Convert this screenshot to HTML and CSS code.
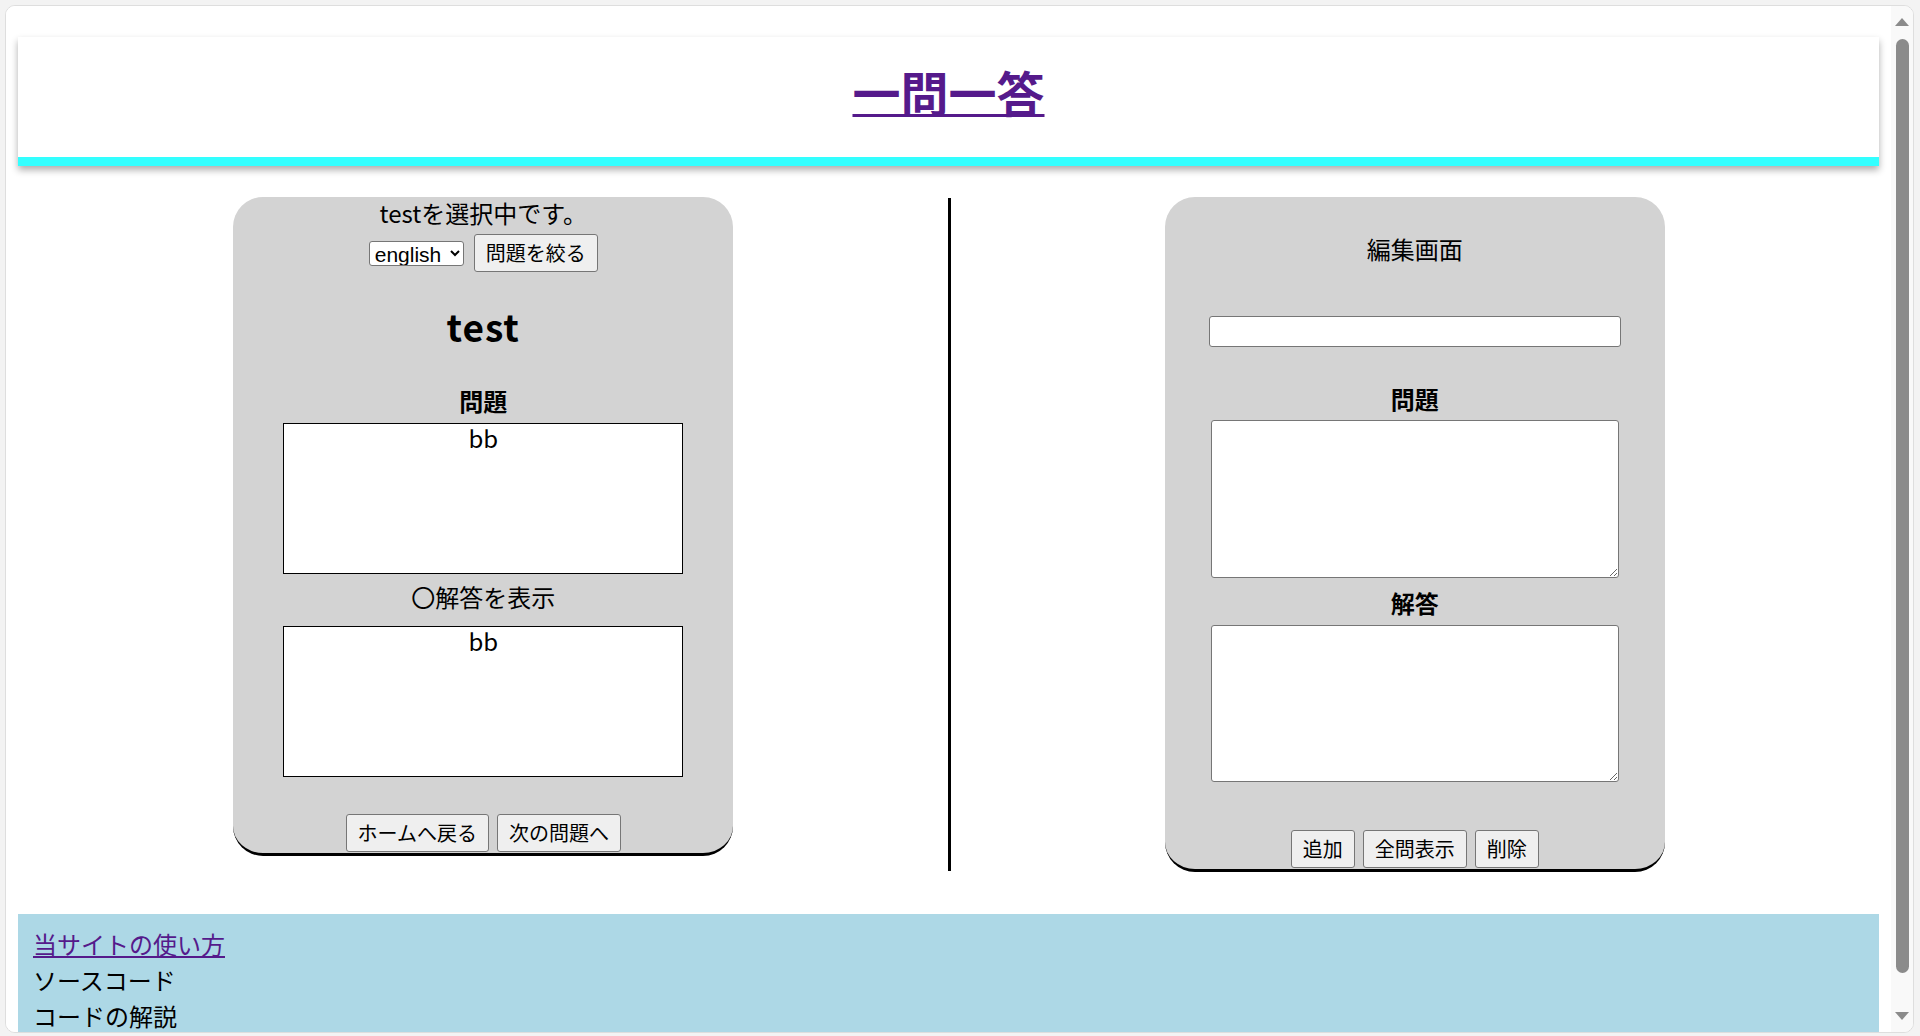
FILE: index.html
```html
<!DOCTYPE html>
<html lang="ja">
<head>
<meta charset="utf-8">
<title>一問一答</title>
<link rel="stylesheet" href="styles.css">
</head>
<body>
<div class="screen">
  <div class="window">
    <div class="page">
      <header class="site-header">
        <h1 class="title"><a href="#" class="title-link">一問一答</a></h1>
      </header>
      <main class="main">
        <section class="col">
          <div class="card card-quiz">
            <p class="sel-text">testを選択中です。</p>
            <div class="controls">
              <select class="genre"><option>english</option></select>
              <button class="btn">問題を絞る</button>
            </div>
            <h2 class="q-title">test</h2>
            <p class="label label-q">問題</p>
            <div class="box box-q">bb</div>
            <p class="show-answer">〇解答を表示</p>
            <div class="box box-a">bb</div>
            <div class="btn-row btn-row-quiz">
              <button class="btn">ホームへ戻る</button>
              <button class="btn">次の問題へ</button>
            </div>
          </div>
        </section>
        <div class="divider"></div>
        <section class="col">
          <div class="card card-edit">
            <p class="edit-title">編集画面</p>
            <input class="field" type="text">
            <p class="label label-eq">問題</p>
            <textarea class="area area-q"></textarea>
            <p class="label label-ea">解答</p>
            <textarea class="area area-a"></textarea>
            <div class="btn-row btn-row-edit">
              <button class="btn">追加</button>
              <button class="btn">全問表示</button>
              <button class="btn">削除</button>
            </div>
          </div>
        </section>
      </main>
      <footer class="site-footer">
        <a href="#" class="foot-link">当サイトの使い方</a>
        <p class="foot-item">ソースコード</p>
        <p class="foot-item">コードの解説</p>
      </footer>
    </div>
    <div class="scrollbar">
      <div class="arrow-up"></div>
      <div class="thumb"></div>
      <div class="arrow-down"></div>
    </div>
  </div>
</div>
</body>
</html>
```
FILE: styles.css
```css
html, body {
  margin: 0;
  padding: 0;
}
body {
  font-family: "Noto Sans CJK JP", "Noto Sans", sans-serif;
  font-size: 24px;
  color: #000;
  background: #f3f3f3;
}
.screen {
  width: 1920px;
  height: 1036px;
  box-sizing: border-box;
  padding: 5px 6px 3px 5px;
  background: #f3f3f3;
}
.window {
  height: 100%;
  box-sizing: border-box;
  border: 1px solid #dedede;
  border-radius: 10px;
  background: #fff;
  display: flex;
  overflow: hidden;
}
.page {
  flex: 1;
  min-width: 0;
  padding: 31px 12px 0 12px;
  overflow: hidden;
  background: #fff;
}

/* header */
.site-header {
  height: 120px;
  box-sizing: content-box;
  background: #fff;
  border-bottom: 9px solid #33ffff;
  box-shadow: 0 4px 7px rgba(0, 0, 0, 0.32);
  text-align: center;
}
.title {
  margin: 0;
  padding-top: 30px;
  font-size: 48px;
  line-height: 48px;
  font-weight: bold;
}
.title-link {
  color: #551a8b;
  text-decoration: underline;
  text-decoration-thickness: 3px;
}

/* main */
.main {
  display: flex;
  align-items: flex-start;
  margin-top: 31px;
  padding-left: 1px;
}
.col {
  flex: 1;
  display: flex;
  justify-content: center;
}
.divider {
  width: 3px;
  height: 673px;
  margin-top: 1px;
  background: #000;
}
.card {
  width: 500px;
  box-sizing: border-box;
  background: #d3d3d3;
  border-radius: 30px;
  border-bottom: 3px solid #000;
  display: flex;
  flex-direction: column;
  align-items: center;
}
.card p {
  margin: 0;
}
.card-quiz {
  padding-bottom: 1px;
}
.sel-text {
  line-height: 32px;
}
.controls {
  margin-top: 5px;
  height: 38px;
  display: flex;
  align-items: center;
  gap: 10px;
}
.genre {
  margin: 0;
  width: 95px;
  height: 25px;
  box-sizing: border-box;
  font-family: "Liberation Sans", Arial, sans-serif;
  font-size: 21px;
  color: #000;
  background: #fff;
  border: 1px solid #767676;
  border-radius: 3px;
  padding: 0 0 0 1px;
  margin-top: 1px;
}
.btn {
  margin: 0;
  height: 38px;
  box-sizing: border-box;
  padding: 0 11px;
  font-family: "Noto Sans CJK JP", sans-serif;
  font-size: 20px;
  line-height: 36px;
  color: #000;
  background: #efefef;
  border: 1px solid #767676;
  border-radius: 3px;
}
.q-title {
  margin: 27px 0 0 0;
  font-size: 37px;
  line-height: 54px;
  font-weight: bold;
  letter-spacing: 1px;
}
.label {
  font-weight: bold;
  line-height: 36px;
}
.label-q {
  margin-top: 30px !important;
}
.box {
  width: 400px;
  height: 151px;
  box-sizing: border-box;
  border: 1px solid #000;
  background: #fff;
  text-align: center;
  line-height: 27px;
}
.box-q {
  margin-top: 4px;
}
.show-answer {
  margin-top: 5px !important;
  line-height: 36px;
}
.box-a {
  margin-top: 11px;
}
.btn-row {
  display: flex;
  gap: 8px;
}
.btn-row-quiz {
  margin-top: 37px;
}

/* edit card */
.card-edit {
  padding-top: 34px;
  padding-bottom: 1px;
}
.edit-title {
  line-height: 36px;
}
.field {
  margin: 49px 0 0 0;
  width: 412px;
  height: 31px;
  box-sizing: border-box;
  border: 1px solid #767676;
  border-radius: 3px;
  background: #fff;
  padding: 0 3px;
  font-size: 20px;
}
.label-eq {
  margin-top: 34px !important;
}
.area {
  margin: 0;
  width: 408px;
  box-sizing: border-box;
  border: 1px solid #767676;
  border-radius: 3px;
  background: #fff;
  padding: 3px;
  font-size: 20px;
  font-family: "Liberation Mono", monospace;
}
.area-q {
  margin-top: 3px;
  height: 158px;
}
.label-ea {
  margin-top: 7px !important;
}
.area-a {
  margin-top: 4px;
  height: 157px;
}
.btn-row-edit {
  margin-top: 48px;
}

/* footer */
.site-footer {
  margin-top: 42px;
  background: #add8e6;
  padding: 12px 15px 20px 15px;
  line-height: 36px;
}
.foot-link {
  display: block;
  width: max-content;
  color: #551a8b;
  text-decoration: underline;
}
.foot-item {
  margin: 0;
}

/* scrollbar */
.scrollbar {
  width: 22px;
  flex: none;
  background: #f9f9f9;
  display: flex;
  flex-direction: column;
  align-items: center;
  padding-top: 12px;
  box-sizing: border-box;
}
.arrow-up {
  width: 0;
  height: 0;
  border-left: 7px solid transparent;
  border-right: 7px solid transparent;
  border-bottom: 8px solid #8b8b8b;
}
.thumb {
  margin-top: 13px;
  width: 13px;
  height: 934px;
  border-radius: 7px;
  background: #8b8b8b;
}
.arrow-down {
  margin-top: 39px;
  width: 0;
  height: 0;
  border-left: 7px solid transparent;
  border-right: 7px solid transparent;
  border-top: 8px solid #8b8b8b;
}
```
